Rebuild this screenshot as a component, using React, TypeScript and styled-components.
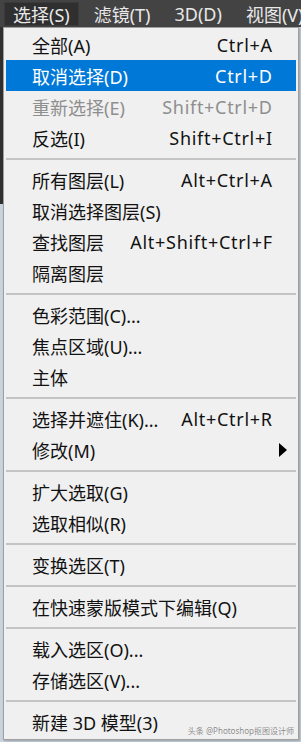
import React from "react";
import styled, { createGlobalStyle } from "styled-components";

const GlobalStyle = createGlobalStyle`
    html, body {
        margin: 0;
        padding: 0;
    }
    body {
        font-family: "Noto Sans", "Noto Sans CJK SC", sans-serif;
    }
`;

type Entry =
    | "sep"
    | {
          label: string;
          shortcut?: string;
          active?: boolean;
          disabled?: boolean;
          submenu?: boolean;
      };

const entries: Entry[] = [
    { label: "全部(A)", shortcut: "Ctrl+A" },
    { label: "取消选择(D)", shortcut: "Ctrl+D", active: true },
    { label: "重新选择(E)", shortcut: "Shift+Ctrl+D", disabled: true },
    { label: "反选(I)", shortcut: "Shift+Ctrl+I" },
    "sep",
    { label: "所有图层(L)", shortcut: "Alt+Ctrl+A" },
    { label: "取消选择图层(S)" },
    { label: "查找图层", shortcut: "Alt+Shift+Ctrl+F" },
    { label: "隔离图层" },
    "sep",
    { label: "色彩范围(C)..." },
    { label: "焦点区域(U)..." },
    { label: "主体" },
    "sep",
    { label: "选择并遮住(K)...", shortcut: "Alt+Ctrl+R" },
    { label: "修改(M)", submenu: true },
    "sep",
    { label: "扩大选取(G)" },
    { label: "选取相似(R)" },
    "sep",
    { label: "变换选区(T)" },
    "sep",
    { label: "在快速蒙版模式下编辑(Q)" },
    "sep",
    { label: "载入选区(O)..." },
    { label: "存储选区(V)..." },
    "sep",
    { label: "新建 3D 模型(3)" }
];

const menuTitles = ["选择(S)", "滤镜(T)", "3D(D)", "视图(V)"];

const Screen = styled.div`
    position: relative;
    width: 301px;
    height: 742px;
    overflow: hidden;
    background-color: #c9d3de;
    background-image: linear-gradient(#2f2f2f, #2f2f2f);
    background-size: 3px 177px;
    background-position: 0 27px;
    background-repeat: no-repeat;
`;

const MenuBar = styled.div`
    display: flex;
    align-items: center;
    gap: 6px;
    height: 27px;
    padding-left: 4px;
    background: #434343;
    white-space: nowrap;
`;

const MenuTitle = styled.div<{ $open?: boolean }>`
    display: flex;
    align-items: center;
    height: 24px;
    padding: 0 9px;
    font-size: 18px;
    color: #e8e8e8;
    background: ${p => (p.$open ? "#2f2f2f" : "transparent")};
    box-shadow: ${p => (p.$open ? "inset 0 0 0 1px #3a3a3a" : "none")};
`;

const Dropdown = styled.div`
    width: 290px;
    margin-left: 3px;
    padding: 1px 2px 2px;
    background: #f0f0f0;
    border: 1px solid #a0a0a0;
    box-shadow: 1px 1px 2px rgba(0, 0, 0, 0.25);
`;

const Row = styled.div<{ $active?: boolean; $disabled?: boolean }>`
    display: flex;
    align-items: center;
    justify-content: space-between;
    height: 31px;
    padding: 0 24px 0 26px;
    font-size: 18px;
    white-space: nowrap;
    background: ${p => (p.$active ? "#0078d7" : "transparent")};
    color: ${p =>
        p.$active ? "#ffffff" : p.$disabled ? "#8e8e8e" : "#121212"};
`;

const Shortcut = styled.span`
    margin-left: 16px;
    letter-spacing: 0.7px;
    margin-right: -0.7px;
`;

const SubArrow = styled.span`
    width: 0;
    height: 0;
    margin-right: -15px;
    border-top: 7.5px solid transparent;
    border-bottom: 7.5px solid transparent;
    border-left: 8px solid #000;
`;

const Separator = styled.div`
    display: flex;
    align-items: center;
    height: 11px;

    &::after {
        content: "";
        flex: 1;
        height: 2px;
        background: #c4c4c4;
    }
`;

const Watermark = styled.div`
    position: absolute;
    right: 7px;
    bottom: 6px;
    font-size: 8px;
    color: #8a8a8a;
    white-space: nowrap;
    text-shadow: 0 0 1px #ffffff;
`;

const App = () => {
    return (
        <Screen>
            <GlobalStyle />
            <MenuBar>
                {menuTitles.map((title, i) => (
                    <MenuTitle key={title} $open={i === 0}>
                        {title}
                    </MenuTitle>
                ))}
            </MenuBar>
            <Dropdown>
                {entries.map((entry, i) =>
                    entry === "sep" ? (
                        <Separator key={i} />
                    ) : (
                        <Row
                            key={i}
                            $active={entry.active}
                            $disabled={entry.disabled}
                        >
                            <span>{entry.label}</span>
                            {entry.shortcut && (
                                <Shortcut>{entry.shortcut}</Shortcut>
                            )}
                            {entry.submenu && <SubArrow />}
                        </Row>
                    )
                )}
            </Dropdown>
            <Watermark>头条 @Photoshop抠图设计师</Watermark>
        </Screen>
    );
};

export default App;
